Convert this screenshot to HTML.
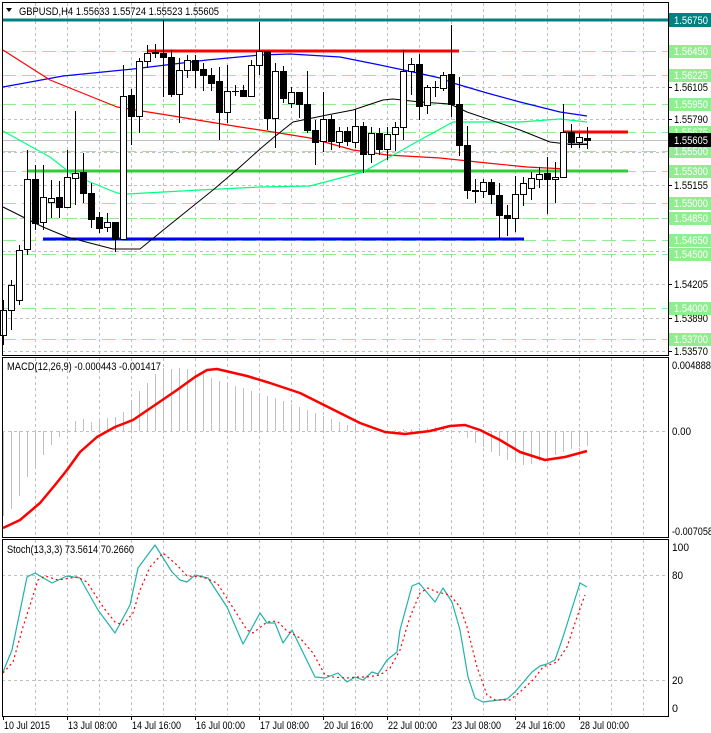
<!DOCTYPE html>
<html><head><meta charset="utf-8">
<style>
html,body{margin:0;padding:0;background:#fff;width:711px;height:733px;overflow:hidden}
svg{display:block}
text{font-family:"Liberation Sans",sans-serif;font-size:11px}
</style></head>
<body>
<svg id="s" width="711" height="733" viewBox="0 0 711 733" xmlns="http://www.w3.org/2000/svg">
<rect width="711" height="733" fill="#fff"/>
<g id="grid"></g>
<g id="lv"></g>
<g id="ma"></g>
<g id="cd"></g>
<g id="ind"></g>
<g id="ax"></g>
<text x="19" y="15" fill="#000" textLength="200" lengthAdjust="spacingAndGlyphs">GBPUSD,H4  1.55633 1.55724 1.55523 1.55605</text>
<path d="M6 8 L12 8 L9 12 Z" fill="#000"/>
<text x="7" y="370" fill="#000" textLength="154" lengthAdjust="spacingAndGlyphs">MACD(12,26,9) -0.000443 -0.001417</text>
<text x="7" y="553" fill="#000" textLength="127" lengthAdjust="spacingAndGlyphs">Stoch(13,3,3) 73.5614 70.2660</text>
</svg>
<script>
var NS="http://www.w3.org/2000/svg";
function el(p,t,a,txt){var e=document.createElementNS(NS,t);for(var k in a)e.setAttribute(k,a[k]);if(txt!=null)e.textContent=txt;document.getElementById(p).appendChild(e);return e;}
function pl(p,pts,st,w,dash){el(p,"polyline",{points:pts.map(function(q){return q.join(",")}).join(" "),fill:"none",stroke:st,"stroke-width":w,"stroke-dasharray":dash||"none","stroke-linejoin":"round"});}
for(var x=35;x<668;x+=32){[[3,355],[358,537],[540,715]].forEach(function(r){el("grid","line",{x1:x+.5,y1:r[0],x2:x+.5,y2:r[1],stroke:"#c0c0c0","stroke-dasharray":"3,3"});});}
[87,119,152,185,218,251,284,318,351].forEach(function(y){el("grid","line",{x1:2,y1:y+.5,x2:668,y2:y+.5,stroke:"#c0c0c0","stroke-dasharray":"3,3"});});
el("grid","line",{x1:2,y1:431.5,x2:668,y2:431.5,stroke:"#c0c0c0","stroke-dasharray":"3,3"});
[575,680].forEach(function(y){el("grid","line",{x1:2,y1:y+.5,x2:668,y2:y+.5,stroke:"#c0c0c0","stroke-dasharray":"3,3"});});
var gl=[51,75,104,132,151,171,203,218,240,254,308,339];
gl.forEach(function(y){el("lv","line",{x1:2,y1:y+.5,x2:668,y2:y+.5,stroke:"#90ee90","stroke-dasharray":"14,6"});});
el("lv","line",{x1:2,y1:140.5,x2:668,y2:140.5,stroke:"#c0c0c0"});
el("lv","line",{x1:2,y1:20,x2:668,y2:20,stroke:"#008080","stroke-width":3});
el("lv","line",{x1:147,y1:51,x2:459,y2:51,stroke:"#ff0000","stroke-width":3});
el("lv","line",{x1:563,y1:132,x2:628,y2:132,stroke:"#ff0000","stroke-width":3});
el("lv","line",{x1:27,y1:171,x2:628,y2:171,stroke:"#32cd32","stroke-width":3});
el("lv","line",{x1:43,y1:239,x2:524,y2:239,stroke:"#0000ff","stroke-width":3});
pl("ma",[[3,87],[63,76],[133,69],[207,60],[260,55],[290,54],[340,57],[380,65],[413,72],[440,78],[453,83],[487,93],[520,102],[560,112],[587,116]],"#0000ff",1.2);
pl("ma",[[3,50],[50,80],[117,107],[167,115],[240,127],[273,132],[310,138],[353,150],[387,155],[440,158],[487,163],[527,167],[567,169]],"#ff0000",1.2);
pl("ma",[[3,131],[50,157],[73,175],[117,193],[127,194],[200,190],[260,187],[310,186],[363,172],[420,140],[453,122],[520,122],[560,119],[587,122]],"#00ff7f",1.2);
pl("ma",[[3,207],[43,227],[67,237],[113,249],[140,249],[167,227],[213,190],[240,167],[260,149],[273,138],[293,122],[327,115],[353,110],[383,100],[393,99],[420,102],[450,104],[467,112],[520,130],[550,142],[567,144],[587,144]],"#000",1);
var C=[[335,310,300,345],[310,285,280,330],[300,250,245,305],[249,179,150,255],[179,223,165,230],[222,197,165,230],[202,198,180,218],[197,207,181,218],[207,177,150,207],[178,173,111,205],[172,193,153,203],[193,219,183,228],[217,228,212,233],[227,222,213,232],[222,239,222,252],[239,96,65,240],[95,116,89,145],[116,61,58,133],[61,53,45,68],[53,52,44,58],[53,57,20,97],[57,94,50,97],[94,70,58,123],[70,60,55,78],[60,70,55,88],[69,75,63,91],[75,83,68,91],[81,112,67,140],[112,91,65,123],[91,91,85,96],[90,96,85,96],[96,65,60,97],[65,51,22,75],[51,118,51,130],[118,71,63,148],[71,98,66,103],[103,92,87,108],[92,104,92,118],[104,130,71,133],[130,142,120,165],[141,119,92,152],[119,141,115,150],[142,131,127,148],[131,141,127,146],[142,126,109,148],[126,154,122,173],[154,133,127,163],[133,149,128,155],[149,134,127,160],[134,127,122,151],[127,71,50,140],[71,64,58,95],[64,106,54,120],[105,87,85,114],[87,87,81,97],[88,75,72,91],[74,104,25,117],[104,145,77,156],[145,190,126,199],[190,191,179,203],[191,182,179,198],[182,194,179,204],[195,215,183,238],[215,218,205,236],[218,194,176,232],[194,183,177,206],[188,178,172,200],[179,174,167,188],[173,179,157,214],[179,177,162,203],[177,132,104,178],[132,142,124,148],[142,137,133,148],[138,140,127,149]];
C.forEach(function(c,i){var x=3+8*i,o=c[0],cl=c[1],top=Math.min(o,cl),bot=Math.max(o,cl);var bull=cl<o;
el("cd","line",{x1:x+.5,y1:c[2],x2:x+.5,y2:c[3],stroke:"#000"});
if(bot-top<1){el("cd","line",{x1:x-3,y1:top+.5,x2:x+4,y2:top+.5,stroke:"#000"});}
else el("cd","rect",{x:x-2.5,y:top+.5,width:6,height:bot-top,fill:bull?"#fff":"#000",stroke:"#000"});});
el("cd","line",{x1:568,y1:144.5,x2:587,y2:144.5,stroke:"#000"});
var H=[516,509,496,477,466,455,445,437,429,421,419,422,420,418,417,412,401,391,383,374,368,369,368,369,371,374,378,381,383,386,388,391,393,396,398,401,404,407,410,413,416,419,422,425,427,429,430,431,432,430,429,429,428,428,427,428,430,433,438,443,447,452,456,460,463,465,464,461,458,455,452,449,447,446];
H.forEach(function(h,i){var x=3+8*i+.5;el("ind","line",{x1:x,y1:431,x2:x,y2:h,stroke:"#c0c0c0"});});
pl("ind",[[3,528],[20,520],[40,503],[55,485],[67,470],[80,452],[97,437],[115,427],[133,420],[155,405],[177,390],[195,377],[207,370],[217,369],[247,376],[270,383],[300,393],[330,408],[360,423],[385,432],[405,434],[430,431],[450,426],[465,425],[480,430],[500,440],[520,452],[545,460],[565,457],[587,451]],"#ff0000",2.5);
pl("ind",[[3,672],[12,650],[27,577],[35,573],[52,583],[67,576],[80,578],[98,610],[115,633],[130,605],[138,568],[155,545],[172,572],[180,580],[187,582],[195,575],[208,578],[227,607],[243,644],[260,613],[267,623],[275,623],[283,643],[292,630],[315,677],[325,678],[338,673],[347,682],[355,677],[363,680],[372,672],[378,674],[387,660],[397,652],[400,630],[412,586],[419,583],[435,602],[443,588],[452,602],[460,630],[468,677],[475,698],[483,702],[507,699],[515,692],[532,672],[540,666],[547,664],[555,660],[563,637],[580,583],[587,587]],"#20b2aa",1.2);
pl("ind",[[3,673],[13,662],[23,627],[38,580],[45,576],[58,580],[77,577],[87,582],[103,607],[115,622],[123,625],[133,613],[140,590],[150,567],[163,553],[177,565],[187,576],[203,577],[217,583],[230,603],[247,630],[253,633],[267,622],[277,621],[287,631],[300,638],[313,653],[325,675],[333,677],[347,678],[357,677],[367,677],[380,675],[390,668],[400,650],[410,617],[420,593],[428,588],[437,592],[450,595],[460,607],[467,627],[477,667],[487,695],[495,700],[510,700],[520,692],[533,680],[543,667],[557,662],[567,647],[577,617],[585,595]],"#ff0000",1.2,"2,3");
[[2,2,666,353],[2,357,666,180],[2,539,666,177]].forEach(function(r){el("ax","rect",{x:r[0]+.5,y:r[1]+.5,width:r[2],height:r[3],fill:"none",stroke:"#000"});});
function T(x,y,f,s,w){return el("ax","text",{x:x,y:y,fill:f,textLength:w,lengthAdjust:"spacingAndGlyphs"},s);}
[[87,"1.56105"],[119,"1.55790"],[185,"1.55155"],[284,"1.54205"],[318,"1.53890"],[351,"1.53570"]].forEach(function(a){el("ax","line",{x1:668,y1:a[0]+.5,x2:672,y2:a[0]+.5,stroke:"#000"});T(674,a[0]+4,"#000",a[1],34);});
[[51,"1.56450"],[75,"1.56225"],[104,"1.55950"],[132,"1.55675"],[151,"1.55500"],[171,"1.55300"],[203,"1.55000"],[218,"1.54850"],[240,"1.54650"],[254,"1.54500"],[308,"1.54000"],[339,"1.53700"]].forEach(function(a){el("ax","rect",{x:669,y:a[0]-6,width:42,height:13,fill:"#90ee90"});T(674,a[0]+4,"#fff",a[1],34);});
el("ax","rect",{x:669,y:13,width:42,height:14,fill:"#008080"});T(674,24,"#fff","1.56750",34);
el("ax","rect",{x:669,y:133,width:42,height:14,fill:"#000"});T(674,144,"#fff","1.55605",34);
T(672,369,"#000","0.004888",39);T(672,435,"#000","0.00",19);T(672,535,"#000","-0.007058",41);
T(672,551,"#000","100",17);T(672,579,"#000","80",11);T(672,684,"#000","20",11);T(672,712,"#000","0",6);
[[3,"10 Jul 2015",46],[67,"13 Jul 08:00",49],[131,"14 Jul 16:00",49],[195,"16 Jul 00:00",49],[259,"17 Jul 08:00",49],[323,"20 Jul 16:00",49],[387,"22 Jul 00:00",49],[451,"23 Jul 08:00",49],[515,"24 Jul 16:00",49],[579,"28 Jul 00:00",49]].forEach(function(a){el("ax","line",{x1:a[0]+.5,y1:716,x2:a[0]+.5,y2:720,stroke:"#000"});T(a[0]+1,729,"#000",a[1],a[2]);});
</script>
</body></html>
